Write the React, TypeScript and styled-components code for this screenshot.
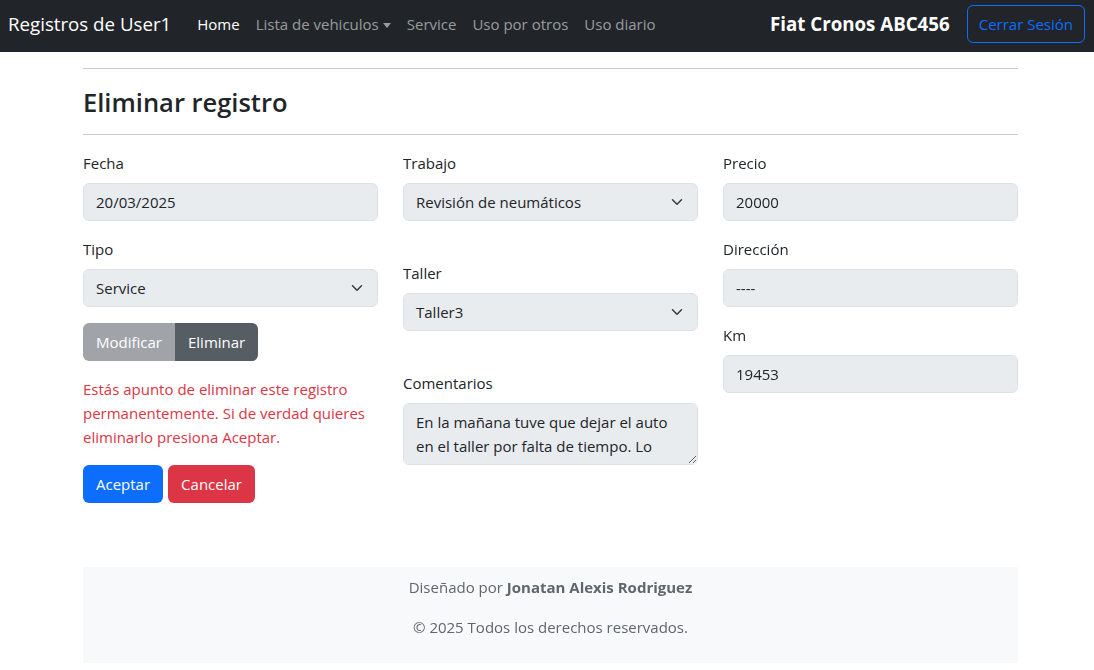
import React from "react";
import styled, { createGlobalStyle } from "styled-components";

const GlobalStyle = createGlobalStyle`
  * { box-sizing: border-box; }
  body {
    margin: 0;
    background: #fff;
    color: #212529;
    font-family: "Open Sans", "Noto Sans", sans-serif;
    font-size: 15px;
    line-height: 24px;
  }
`;

const Navbar = styled.nav`
  height: 52px;
  background: #212529;
  display: flex;
  align-items: center;
  padding: 0 9px 4px 8px;
`;

const Brand = styled.span`
  color: #fff;
  font-size: 18.7px;
  margin-right: 18px;
`;

const NavLinks = styled.div`
  display: flex;
  flex: 1;
`;

const NavLink = styled.span<{ $active?: boolean }>`
  padding: 8px;
  color: ${(p) => (p.$active ? "#fff" : "rgba(255,255,255,0.55)")};
  display: flex;
  align-items: center;
  gap: 4px;
`;

const Caret = styled.span`
  display: inline-block;
  border-top: 5px solid currentColor;
  border-left: 4px solid transparent;
  border-right: 4px solid transparent;
  margin-top: 2px;
`;

const Vehicle = styled.span`
  color: #fff;
  font-size: 18.7px;
  font-weight: 700;
  margin-right: 17px;
`;

const OutlineButton = styled.button`
  font: inherit;
  color: #0d6efd;
  background: transparent;
  border: 1px solid #0d6efd;
  border-radius: 6px;
  padding: 6px 11px;
  height: 38px;
`;

const Main = styled.main`
  width: 935px;
  margin-left: 83px;
  padding-top: 16px;
`;

const Rule = styled.hr`
  border: 0;
  border-top: 1px solid #c9cbcd;
  margin: 0;
`;

const Title = styled.h3`
  font-size: 25.5px;
  line-height: 33px;
  font-weight: 600;
  margin: 17px 0 15px;
`;

const FormGrid = styled.div`
  display: grid;
  grid-template-columns: repeat(3, 295px);
  column-gap: 25px;
  margin-top: 16px;
  align-items: start;
`;

const Column = styled.div`
  display: flex;
  flex-direction: column;
`;

const Field = styled.div<{ $spaced?: boolean }>`
  margin-bottom: 16px;
  margin-top: ${(p) => (p.$spaced ? "24px" : "0")};
`;

const Label = styled.label`
  display: block;
  margin-bottom: 8px;
`;

const Control = styled.div`
  height: 38px;
  background: #e9ecef;
  border: 1px solid #dee2e6;
  border-radius: 6px;
  padding: 6px 12px;
  display: flex;
  align-items: center;
  justify-content: space-between;
`;

const TextArea = styled.textarea`
  display: block;
  width: 100%;
  height: 62px;
  background: #e9ecef;
  border: 1px solid #dee2e6;
  border-radius: 6px;
  padding: 6px 12px;
  font: inherit;
  line-height: 24px;
  color: #212529;
  resize: vertical;
`;

const ButtonGroup = styled.div`
  display: flex;
  margin-bottom: 16px;
`;

const GroupButton = styled.button<{ $active?: boolean }>`
  font: inherit;
  height: 38px;
  padding: 6px 13px;
  border: 0;
  color: #fff;
  background: ${(p) => (p.$active ? "#565e64" : "#a0a4a9")};
  border-radius: ${(p) => (p.$active ? "0 6px 6px 0" : "6px 0 0 6px")};
`;

const Warning = styled.p`
  color: #dc3545;
  margin: 0 0 16px;
`;

const Actions = styled.div`
  display: flex;
  gap: 5px;
`;

const SolidButton = styled.button<{ $color: string }>`
  font: inherit;
  height: 38px;
  padding: 6px 13px;
  border: 0;
  border-radius: 6px;
  color: #fff;
  background: ${(p) => p.$color};
`;

const Footer = styled.footer`
  width: 935px;
  margin: 64px 0 0 83px;
  background: #f8f9fa;
  padding: 8px 0;
  text-align: center;
  color: #5f666d;

  p {
    margin: 0 0 16px;
  }
`;

const Chevron = () => (
  <svg width="16" height="12" viewBox="0 0 16 16">
    <path
      d="M2 5l6 6 6-6"
      fill="none"
      stroke="#343a40"
      strokeWidth="2"
      strokeLinecap="round"
      strokeLinejoin="round"
    />
  </svg>
);

const Select: React.FC<{ value: string }> = ({ value }) => (
  <Control>
    <span>{value}</span>
    <Chevron />
  </Control>
);

export default function App() {
  return (
    <>
      <GlobalStyle />
      <Navbar>
        <Brand>Registros de User1</Brand>
        <NavLinks>
          <NavLink $active>Home</NavLink>
          <NavLink>
            Lista de vehiculos <Caret />
          </NavLink>
          <NavLink>Service</NavLink>
          <NavLink>Uso por otros</NavLink>
          <NavLink>Uso diario</NavLink>
        </NavLinks>
        <Vehicle>Fiat Cronos ABC456</Vehicle>
        <OutlineButton>Cerrar Sesión</OutlineButton>
      </Navbar>

      <Main>
        <Rule />
        <Title>Eliminar registro</Title>
        <Rule />
        <FormGrid>
          <Column>
            <Field>
              <Label>Fecha</Label>
              <Control>20/03/2025</Control>
            </Field>
            <Field>
              <Label>Tipo</Label>
              <Select value="Service" />
            </Field>
            <ButtonGroup>
              <GroupButton>Modificar</GroupButton>
              <GroupButton $active>Eliminar</GroupButton>
            </ButtonGroup>
            <Warning>
              Estás apunto de eliminar este registro permanentemente. Si de
              verdad quieres eliminarlo presiona Aceptar.
            </Warning>
            <Actions>
              <SolidButton $color="#0d6efd">Aceptar</SolidButton>
              <SolidButton $color="#dc3545">Cancelar</SolidButton>
            </Actions>
          </Column>

          <Column>
            <Field>
              <Label>Trabajo</Label>
              <Select value="Revisión de neumáticos" />
            </Field>
            <Field $spaced>
              <Label>Taller</Label>
              <Select value="Taller3" />
            </Field>
            <Field $spaced>
              <Label>Comentarios</Label>
              <TextArea
                readOnly
                defaultValue="En la mañana tuve que dejar el auto en el taller por falta de tiempo. Lo retiré a la tarde, cuando terminaron la revisión."
              />
            </Field>
          </Column>

          <Column>
            <Field>
              <Label>Precio</Label>
              <Control>20000</Control>
            </Field>
            <Field>
              <Label>Dirección</Label>
              <Control>----</Control>
            </Field>
            <Field>
              <Label>Km</Label>
              <Control>19453</Control>
            </Field>
          </Column>
        </FormGrid>
      </Main>

      <Footer>
        <p>
          Diseñado por <strong>Jonatan Alexis Rodriguez</strong>
        </p>
        <p>© 2025 Todos los derechos reservados.</p>
      </Footer>
    </>
  );
}
